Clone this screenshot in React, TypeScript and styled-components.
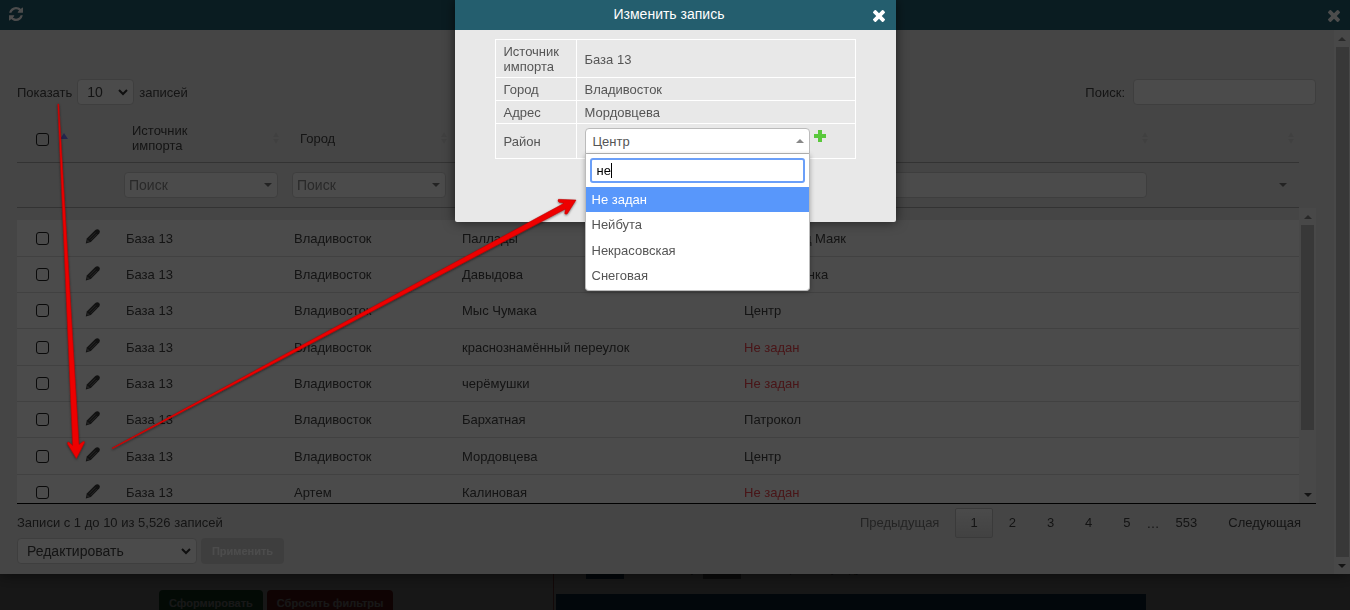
import React from "react";
import styled, { createGlobalStyle, css } from "styled-components";

const GlobalStyle = createGlobalStyle`
  *, *::before, *::after { box-sizing: border-box; }
  html, body { margin: 0; height: 100%; overflow: hidden; }
  body, button, input, select {
    font-family: "Liberation Sans", Arial, sans-serif;
    font-size: 13px;
  }
  body { background: #fff; color: #444; line-height: 15px; }
`;

/* ---------- page under the windows ---------- */

const Page = styled.main`
  display: grid;
  grid-template-columns: 41fr 59fr;
  height: 100vh;
  overflow: hidden;
`;

const FiltersPane = styled.section`
  display: flex;
  justify-content: center;
  align-items: flex-start;
  gap: 4px;
  padding-top: 590px;
  border-right: 1px solid #d06060;
`;

const PageButton = styled.button<{ $tone: "green" | "red" }>`
  flex: none;
  height: 26px;
  padding: 0 10px;
  border: 0;
  border-radius: 4px;
  color: #fff;
  font-size: 11px;
  font-weight: 700;
  background: ${(p) => (p.$tone === "green" ? "#20703c" : "#a02828")};
`;

const ReportPane = styled.section`
  padding: 560px 204px 0 2px;
`;

const Legend = styled.div`
  display: flex;
  align-items: center;
  gap: 7px;
  height: 19px;
  padding-left: 30px;
  margin-bottom: 15px;
  color: #555;
  font-size: 11px;
  white-space: nowrap;
`;

const Swatch = styled.span<{ $color: string }>`
  width: 38px;
  height: 19px;
  background: ${(p) => p.$color};
`;

const ReportBar = styled.div`
  height: 40px;
  background: #1e5078;
`;

const Backdrop = styled.div`
  position: fixed;
  inset: 0;
  background: rgba(0, 0, 0, 0.7);
`;

/* ---------- records window ---------- */

const Panel = styled.section`
  position: fixed;
  top: 0;
  left: 0;
  right: 0;
  background: #e8e8e8;
  box-shadow: 0 0 14px rgba(0, 0, 0, 0.6);
`;

const TitleBar = styled.header`
  display: flex;
  align-items: center;
  justify-content: space-between;
  height: 30px;
  padding: 0 10px 0 9px;
  background: #245e6e;
  color: #fff;
`;

const IconButton = styled.button`
  display: flex;
  padding: 0;
  border: 0;
  background: none;
  color: inherit;
`;

const RefreshButton = styled(IconButton)`
  padding-bottom: 2px;
`;

const CloseButton = styled(IconButton)`
  padding-top: 2px;
`;

const PanelBody = styled.div`
  display: flex;
`;

const PanelContent = styled.div`
  flex: 1;
  min-width: 0;
  padding: 49px 18px 10px 17px;
`;

const Toolbar = styled.div`
  display: flex;
  justify-content: space-between;
  align-items: center;
  margin-bottom: 10px;
`;

const FieldLabel = styled.label<{ $gap: number }>`
  display: flex;
  align-items: center;
  gap: ${(p) => p.$gap}px;
`;

const fieldLook = css`
  height: 26px;
  border: 1px solid #d0d0d0;
  border-radius: 4px;
  background: #fafafa;
  color: #444;
`;

const TextField = styled.input<{ $width?: string }>`
  ${fieldLook}
  display: block;
  width: ${(p) => p.$width ?? "100%"};
  padding: 0 6px;
`;

const SelectBox = styled.span<{ $width?: string }>`
  display: grid;
  align-items: center;
  width: ${(p) => p.$width ?? "100%"};

  > * { grid-area: 1 / 1; }
  > svg { justify-self: end; margin-right: 6px; pointer-events: none; }
`;

const Select = styled.select<{ $bare?: boolean; $indent?: number; $muted?: boolean }>`
  ${fieldLook}
  appearance: none;
  width: 100%;
  padding: 0 20px 0 ${(p) => p.$indent ?? 4}px;
  font-size: 14px;
  ${(p) => p.$muted && "color: #8a8a8a;"}
  ${(p) => p.$bare && "border-color: transparent; background: none;"}
`;

const Grid = styled.table`
  width: 100%;
  table-layout: fixed;
  border-collapse: separate;
  border-spacing: 0;
`;

const HeadTable = styled(Grid)`
  width: calc(100% - 17px);
`;

const HeadCell = styled.th`
  height: 48px;
  padding: 8px 5px 9px 16px;
  border-bottom: 1px solid #aaa;
  font-weight: 400;
  text-align: left;
`;

const HeadInner = styled.div`
  display: flex;
  align-items: center;
  justify-content: space-between;
`;

const HeadText = styled.span<{ $narrow?: boolean }>`
  ${(p) => p.$narrow && "width: 90px;"}
`;

const CheckHead = styled(HeadCell)`
  padding: 9px 0 8px 19px;
`;

const FilterCell = styled.td`
  padding: 9px 6px 9px 8px;
  border-bottom: 1px solid #aaa;
`;

const Check = styled.input`
  appearance: none;
  display: block;
  width: 13px;
  height: 13px;
  margin: 0;
  border: 1px solid #222;
  border-radius: 3px;
`;

const ScrollArea = styled.div`
  display: flex;
  height: 296px;
  overflow: hidden;
  border-bottom: 1px solid #000;
`;

const Rows = styled.div`
  flex: 1;
  min-width: 0;
  padding-top: 12px;
  overflow: hidden;
`;

const Row = styled.tr`
  height: 36px;
  background: #fafafa;
  &:nth-child(3n + 1) { height: 37px; }
`;

const Cell = styled.td<{ $alert?: boolean }>`
  padding: 0 10px;
  border-bottom: 1px solid #dadada;
  color: ${(p) => (p.$alert ? "#f04850" : "inherit")};
`;

const CheckCell = styled(Cell)`
  padding: 0 0 0 19px;
`;

const EditCell = styled(Cell)`
  padding: 0 0 4px 17px;
`;

const Track = styled.div<{ $size: number }>`
  display: flex;
  flex-direction: column;
  align-items: center;
  flex: none;
  width: ${(p) => p.$size}px;
  background: #f0f0f0;
`;

const TrackEnd = styled.span`
  display: flex;
  align-items: center;
  justify-content: center;
  height: 17px;
`;

const Thumb = styled.span<{ $share: number }>`
  flex: ${(p) => p.$share};
  width: 13px;
  background: #bdbdbd;
`;

const TrackRest = styled.span<{ $share: number }>`
  flex: ${(p) => p.$share};
`;

const Footer = styled.footer`
  display: flex;
  justify-content: space-between;
  align-items: flex-start;
  padding-top: 4px;
`;

const Info = styled.p`
  margin: 0;
  line-height: 30px;
`;

const BulkActions = styled.div`
  display: flex;
  gap: 4px;
`;

const ApplyButton = styled.button`
  height: 26px;
  width: 83px;
  padding: 0;
  border: 0;
  border-radius: 4px;
  background: #d0d0d0;
  color: #fff;
  font-size: 11px;
  font-weight: 700;
`;

const Pager = styled.nav`
  display: flex;
  align-items: center;
  gap: 1px;
`;

const PageLink = styled.a<{ $current?: boolean; $disabled?: boolean }>`
  min-width: 37px;
  padding: 6px 14px 7px;
  border: 1px solid ${(p) => (p.$current ? "#c4c4c4" : "transparent")};
  border-radius: 2px;
  background: ${(p) => (p.$current ? "linear-gradient(#fafafa, #dcdcdc)" : "none")};
  color: ${(p) => (p.$disabled ? "#777" : "#444")};
  text-align: center;
  text-decoration: none;
`;

const Dots = styled.span`
  width: 13px;
  text-align: center;
`;

/* ---------- edit dialog ---------- */

const Dialog = styled.section`
  position: fixed;
  top: 0;
  left: 0;
  right: 0;
  width: 441px;
  margin: 0 auto;
  border-radius: 0 0 2px 2px;
  background: #e8e8e8;
  color: #555;
  box-shadow: 0 0 12px rgba(0, 0, 0, 0.6);
`;

const DialogBar = styled(TitleBar)`
  padding: 0 11px;
`;

const DialogTitle = styled.h2`
  flex: 1;
  margin: 0;
  padding-bottom: 2px;
  font-size: 14px;
  font-weight: 400;
  text-align: center;
`;

const DialogBody = styled.div`
  min-height: 192px;
  padding: 9px 40px;
`;

const Record = styled.table`
  width: 100%;
  border-collapse: collapse;

  th, td {
    padding: 4px 8px 3px;
    border: 1px solid #fff;
    font-weight: 400;
    text-align: left;
  }
  th { width: 81px; }
  tr:last-child td { padding-bottom: 4px; }
`;

const DistrictField = styled.div`
  display: flex;
  align-items: flex-start;
  gap: 4px;
  color: #5ac83c;
`;

const AddButton = styled(IconButton)`
  padding-top: 2px;
`;

const Combo = styled.div`
  position: relative;
  width: 225px;
  color: #555;
`;

const ComboToggle = styled.button`
  display: flex;
  align-items: center;
  justify-content: space-between;
  width: 100%;
  height: 26px;
  padding: 0 5px 0 7px;
  border: 1px solid #bbb;
  border-radius: 4px 4px 0 0;
  background: #fff;
  color: #555;
`;

const ComboPopup = styled.div`
  position: absolute;
  top: 26px;
  left: 0;
  right: 0;
  padding-bottom: 1px;
  border: 1px solid #bbb;
  border-top: 0;
  border-radius: 0 0 4px 4px;
  background: #fff;
  box-shadow: 0 1px 5px rgba(0, 0, 0, 0.3);
`;

const ComboSearch = styled.label`
  display: flex;
  align-items: center;
  height: 25px;
  margin: 4px;
  padding-left: 5px;
  border: 2px solid #6b9ff8;
  border-radius: 3px;
`;

const SearchInput = styled.input`
  field-sizing: content;
  max-width: 100%;
  padding: 0;
  border: 0;
  outline: 0;
  background: none;
  color: #000;
  caret-color: transparent;
`;

const Caret = styled.span`
  width: 1px;
  height: 15px;
  background: #000;
`;

const Options = styled.ul`
  margin: 0;
  padding: 0;
  list-style: none;
`;

const Option = styled.li<{ $active?: boolean }>`
  height: 25px;
  padding: 0 6px;
  line-height: 25px;
  background: ${(p) => (p.$active ? "#5897fb" : "transparent")};
  color: ${(p) => (p.$active ? "#fff" : "inherit")};
  &:nth-child(even) { height: 26px; line-height: 26px; }
`;

const Annotations = styled.svg`
  position: fixed;
  top: 0;
  left: 0;
  pointer-events: none;
`;

/* ---------- icons ---------- */

const RefreshIcon = () => (
  <svg width="14" height="14" viewBox="128 128 1536 1536" fill="currentColor" aria-hidden="true">
    <path d="M1639 1056q0 5-1 7-64 268-268 434.5t-478 166.5q-146 0-282.5-55t-243.5-157l-129 129q-19 19-45 19t-45-19-19-45v-448q0-26 19-45t45-19h448q26 0 45 19t19 45-19 45l-137 137q71 66 161 102t187 36q134 0 250-65t186-179q11-17 53-117 8-23 30-23h192q13 0 22.5 9.5t9.5 22.5zm25-800v448q0 26-19 45t-45 19h-448q-26 0-45-19t-19-45 19-45l138-138q-148-137-349-137-134 0-250 65t-186 179q-11 17-53 117-8 23-30 23h-199q-13 0-22.5-9.5t-9.5-22.5v-7q65-268 270-434.5t480-166.5q146 0 284 55.5t245 156.5l130-129q19-19 45-19t45 19 19 45z" />
  </svg>
);

const CloseIcon = () => (
  <svg width="12" height="12" viewBox="302 302 1188 1188" fill="currentColor" aria-hidden="true">
    <path d="M1490 1322q0 40-28 68l-136 136q-28 28-68 28t-68-28l-294-294-294 294q-28 28-68 28t-68-28l-136-136q-28-28-28-68t28-68l294-294-294-294q-28-28-28-68t28-68l136-136q28-28 68-28t68 28l294 294 294-294q28-28 68-28t68 28l136 136q28 28 28 68t-28 68l-294 294 294 294q28 28 28 68z" transform="translate(0 -64)" />
  </svg>
);

const PencilIcon = () => (
  <svg width="16" height="16" viewBox="0 0 16 16" aria-hidden="true">
    <path d="M.8 15.400 1.800 10.600 10.300 2.100Q12.300.3 14.200 2 15.700 3.700 14.200 5.500L5.800 14Z" fill="#3a3a3a" />
    <path d="M4 10.800 10.400 4.400M5.500 12.300 11.900 5.900" stroke="#8c8c8c" strokeWidth=".8" fill="none" />
    <path d="M2.500 11.400 4.800 13.700 2.400 14.200 2 13.800Z" fill="#777" />
  </svg>
);

const PlusIcon = () => (
  <svg width="12" height="12" viewBox="0 0 12 12" fill="currentColor" aria-hidden="true">
    <path d="M4 0h4v4h4v4H8v4H4V8H0V4h4z" />
  </svg>
);

const Triangle = ({ up, color = "#777" }: { up?: boolean; color?: string }) => (
  <svg width="8" height="4" viewBox="0 0 8 4" fill={color} aria-hidden="true">
    <path d={up ? "M0 4 4 0l4 4z" : "M0 0l4 4 4-4z"} />
  </svg>
);

const Chevron = () => (
  <svg width="10" height="7" viewBox="0 0 10 7" fill="none" stroke="#333" strokeWidth="2" aria-hidden="true">
    <path d="M1 1l4 4 4-4" />
  </svg>
);

const SortIcon = () => (
  <svg width="6" height="12" viewBox="0 0 6 12" fill="#d8d8d8" aria-hidden="true">
    <path d="M0 5l3-5 3 5zM0 7l3 5 3-5z" />
  </svg>
);

/* ---------- data ---------- */

const RECORDS = [
  ["Владивосток", "Паллады", "Эгершельд Маяк"],
  ["Владивосток", "Давыдова", "Старая Донка"],
  ["Владивосток", "Мыс Чумака", "Центр"],
  ["Владивосток", "краснознамённый переулок", "Не задан"],
  ["Владивосток", "черёмушки", "Не задан"],
  ["Владивосток", "Бархатная", "Патрокол"],
  ["Владивосток", "Мордовцева", "Центр"],
  ["Артем", "Калиновая", "Не задан"],
];

const Column = styled.col<{ $width?: string }>`
  width: ${(p) => p.$width ?? "auto"};
`;

const Columns = () => (
  <colgroup>
    <Column $width="51px" />
    <Column $width="48px" />
    <Column $width="168px" />
    <Column $width="168px" />
    <Column $width="22%" />
    <Column />
    <Column $width="146px" />
  </colgroup>
);

const SortHead = ({ text, narrow }: { text: string; narrow?: boolean }) => (
  <HeadCell>
    <HeadInner>
      <HeadText $narrow={narrow}>{text}</HeadText>
      <SortIcon />
    </HeadInner>
  </HeadCell>
);

const FilterSelect = ({ label, bare }: { label: string; bare?: boolean }) => (
  <SelectBox>
    <Select $muted $bare={bare} aria-label={label}>
      <option>{bare ? "" : "Поиск"}</option>
    </Select>
    <Triangle />
  </SelectBox>
);

const Scrollbar = ({ width, share, rest }: { width: number; share: number; rest: number }) => (
  <Track $size={width} aria-hidden="true">
    <TrackEnd><Triangle up color="#888" /></TrackEnd>
    <Thumb $share={share} />
    {rest > 0 && <TrackRest $share={rest} />}
    <TrackEnd><Triangle color="#444" /></TrackEnd>
  </Track>
);

const RecordsPanel = () => (
  <Panel aria-label="Записи">
    <TitleBar>
      <RefreshButton aria-label="Обновить"><RefreshIcon /></RefreshButton>
      <CloseButton aria-label="Закрыть"><CloseIcon /></CloseButton>
    </TitleBar>
    <PanelBody>
      <PanelContent>
        <Toolbar>
          <FieldLabel $gap={5}>
            Показать
            <SelectBox $width="57px">
              <Select $indent={9}><option>10</option></Select>
              <Chevron />
            </SelectBox>
            записей
          </FieldLabel>
          <FieldLabel $gap={8}>
            Поиск:
            <TextField type="search" $width="183px" />
          </FieldLabel>
        </Toolbar>

        <HeadTable>
          <Columns />
          <thead>
            <tr>
              <CheckHead>
                <HeadInner>
                  <Check type="checkbox" aria-label="Выбрать все" />
                  <svg width="8" height="12" viewBox="0 0 8 12" fill="#7780ff" aria-hidden="true"><path d="M0 6 4 0l4 6z" /></svg>
                </HeadInner>
              </CheckHead>
              <HeadCell />
              <SortHead text="Источник импорта" narrow />
              <SortHead text="Город" />
              <SortHead text="Адрес" />
              <SortHead text="Район" />
              <SortHead text="" />
            </tr>
          </thead>
          <tbody>
            <tr>
              <FilterCell />
              <FilterCell />
              <FilterCell><FilterSelect label="Источник импорта" /></FilterCell>
              <FilterCell><FilterSelect label="Город" /></FilterCell>
              <FilterCell><TextField aria-label="Адрес" /></FilterCell>
              <FilterCell><TextField aria-label="Район" /></FilterCell>
              <FilterCell><FilterSelect label="Статус" bare /></FilterCell>
            </tr>
          </tbody>
        </HeadTable>

        <ScrollArea>
          <Rows>
            <Grid>
              <Columns />
              <tbody>
                {RECORDS.map(([city, address, district]) => (
                  <Row key={address}>
                    <CheckCell><Check type="checkbox" aria-label={`Выбрать: ${address}`} /></CheckCell>
                    <EditCell><IconButton aria-label="Изменить"><PencilIcon /></IconButton></EditCell>
                    <Cell>База 13</Cell>
                    <Cell>{city}</Cell>
                    <Cell>{address}</Cell>
                    <Cell $alert={district === "Не задан"}>{district}</Cell>
                    <Cell />
                  </Row>
                ))}
              </tbody>
            </Grid>
          </Rows>
          <Scrollbar width={17} share={205} rest={56} />
        </ScrollArea>

        <Footer>
          <div>
            <Info>Записи с 1 до 10 из 5,526 записей</Info>
            <BulkActions>
              <SelectBox $width="180px">
                <Select $indent={9} aria-label="Действие"><option>Редактировать</option></Select>
                <Chevron />
              </SelectBox>
              <ApplyButton disabled>Применить</ApplyButton>
            </BulkActions>
          </div>
          <Pager aria-label="Страницы">
            <PageLink href="#prev" $disabled>Предыдущая</PageLink>
            <PageLink href="#1" $current>1</PageLink>
            <PageLink href="#2">2</PageLink>
            <PageLink href="#3">3</PageLink>
            <PageLink href="#4">4</PageLink>
            <PageLink href="#5">5</PageLink>
            <Dots>…</Dots>
            <PageLink href="#553">553</PageLink>
            <PageLink href="#next">Следующая</PageLink>
          </Pager>
        </Footer>
      </PanelContent>
      <Scrollbar width={16} share={1} rest={0} />
    </PanelBody>
  </Panel>
);

const EditDialog = () => (
  <Dialog role="dialog" aria-labelledby="dialog-title">
    <DialogBar>
      <DialogTitle id="dialog-title">Изменить запись</DialogTitle>
      <CloseButton aria-label="Закрыть"><CloseIcon /></CloseButton>
    </DialogBar>
    <DialogBody>
      <Record>
        <tbody>
          <tr><th scope="row">Источник импорта</th><td>База 13</td></tr>
          <tr><th scope="row">Город</th><td>Владивосток</td></tr>
          <tr><th scope="row">Адрес</th><td>Мордовцева</td></tr>
          <tr>
            <th scope="row">Район</th>
            <td>
              <DistrictField>
                <Combo>
                  <ComboToggle aria-expanded="true">Центр<Triangle up color="#888" /></ComboToggle>
                  <ComboPopup>
                    <ComboSearch>
                      <SearchInput defaultValue="не" aria-label="Поиск района" autoFocus />
                      <Caret />
                    </ComboSearch>
                    <Options role="listbox">
                      <Option role="option" aria-selected $active>Не задан</Option>
                      <Option role="option">Нейбута</Option>
                      <Option role="option">Некрасовская</Option>
                      <Option role="option">Снеговая</Option>
                    </Options>
                  </ComboPopup>
                </Combo>
                <AddButton aria-label="Добавить район"><PlusIcon /></AddButton>
              </DistrictField>
            </td>
          </tr>
        </tbody>
      </Record>
    </DialogBody>
  </Dialog>
);

const Arrows = () => (
  <Annotations width="600" height="470" viewBox="0 0 600 470" aria-hidden="true">
    <defs>
      <filter id="drop" x="-20%" y="-20%" width="140%" height="140%">
        <feDropShadow dx="0" dy="1" stdDeviation=".8" floodOpacity=".5" />
      </filter>
    </defs>
    <g fill="#ee0000" stroke="#b00000" strokeWidth=".5" strokeLinejoin="round" filter="url(#drop)">
      <path d="M57.800 104h1L79 444.500 83.500 441.300Q85 441.500 84.300 443L76.400 458.500 67.500 444Q67 442 68.800 442L72.700 445.500Z" />
      <path d="M112 448 564 203.300 559 202.300Q557.300 201 558.500 199.300L576 200 567.500 213.500Q566 215 564.700 213.500L565.500 209 112.500 448.700Z" />
    </g>
  </Annotations>
);

export default function App() {
  return (
    <>
      <GlobalStyle />
      <Page>
        <FiltersPane>
          <PageButton $tone="green">Сформировать</PageButton>
          <PageButton $tone="red">Сбросить фильтры</PageButton>
        </FiltersPane>
        <ReportPane>
          <Legend>
            <Swatch $color="#1e5078" />
            Факт к плану
            <Swatch $color="#777" />
            Факт к прошлому году
          </Legend>
          <ReportBar />
        </ReportPane>
      </Page>
      <Backdrop />
      <RecordsPanel />
      <Backdrop />
      <EditDialog />
      <Arrows />
    </>
  );
}
